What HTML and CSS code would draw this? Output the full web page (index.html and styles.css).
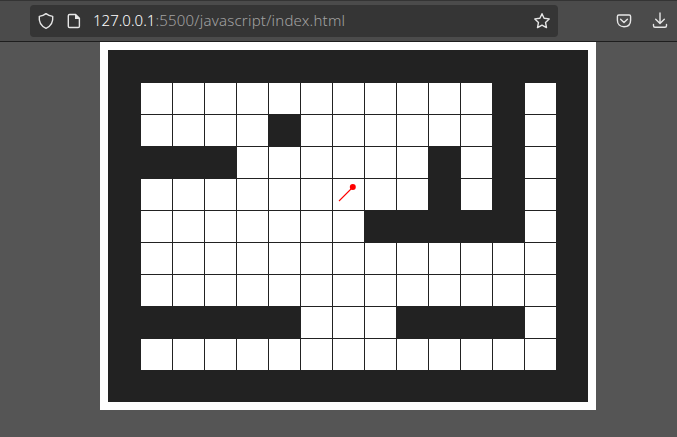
FILE: index.html
```
<!DOCTYPE html>
<html lang="en">
<head>
<meta charset="utf-8">
<title>Maze</title>
<link rel="stylesheet" href="styles.css">
</head>
<body>
<header class="toolbar">
  <div class="urlbar">
    <svg class="icon" viewBox="0 0 18 18"><path d="M9 1.6 C7.2 3.1 4.8 4 2.3 4.4 C1.7 9.6 3.8 14 9 16.3 C14.2 14 16.3 9.6 15.7 4.4 C13.2 4 10.8 3.1 9 1.6Z"/></svg>
    <svg class="icon page" viewBox="0 0 18 18"><path d="M4.6 2.5H10.6L14.4 6.3V14.2Q14.4 15.5 13.1 15.5H4.6Q3.3 15.5 3.3 14.2V3.8Q3.3 2.5 4.6 2.5Z"/><path class="solid" d="M10 2V7H15Z"/></svg>
    <span class="url"><span class="host">127.0.0.1</span><span class="path">:5500/javascript/index.html</span></span>
    <svg class="icon star" viewBox="0 0 18 18"><path d="M9 1.7 11.1 6.3 16.2 6.9 12.5 10.4 13.5 15.6 9 13.1 4.5 15.6 5.5 10.4 1.8 6.9 6.9 6.3Z"/></svg>
  </div>
  <svg class="icon pocket" viewBox="0 0 18 18"><path d="M3.8 3H14.2Q15.6 3 15.6 4.4V8.2C15.6 12.5 12.8 14.7 9 14.7S2.4 12.5 2.4 8.2V4.4Q2.4 3 3.8 3Z"/><path d="M5.6 7.2 9 10.4 12.4 7.2"/></svg>
  <svg class="icon download" viewBox="0 0 18 18"><path d="M9 1V11.4M4.7 7.2 9 11.5 13.3 7.2M2.5 12.4V13.8Q2.5 15.3 4 15.3H14Q15.5 15.3 15.5 13.8V12.4"/></svg>
</header>
<main class="stage">
  <div class="maze" id="maze"></div>
  <svg class="player" viewBox="0 0 32 32"><line x1="7" y1="23" x2="21" y2="9"/><circle cx="20.8" cy="8.9" r="3"/></svg>
</main>
<script src="maze.js"></script>
</body>
</html>
```
FILE: styles.css
```
* { box-sizing: border-box; }
body {
  margin: 0;
  height: 437px;
  overflow: hidden;
  background: #555;
}
.toolbar {
  display: flex;
  align-items: center;
  height: 42px;
  padding-left: 30px;
  background: #4b4b4b;
  border-top: 1px solid #343434;
  border-bottom: 1px solid #1e1e1e;
}
.urlbar {
  display: flex;
  align-items: center;
  width: 528px;
  height: 32px;
  padding: 0 7px;
  border-radius: 4px;
  background: #353535;
}
.icon {
  flex: none;
  width: 18px;
  height: 18px;
  fill: none;
  stroke: #e6e6e6;
  stroke-width: 1.4;
  stroke-linejoin: round;
  stroke-linecap: round;
}
.page { margin-left: 10px; }
.solid { fill: #e6e6e6; stroke: none; }
.url {
  margin-left: 10px;
  padding-bottom: 2px;
  font: 350 15px/20px "Noto Sans", sans-serif;
  white-space: nowrap;
}
.host { color: #fff; letter-spacing: 0; }
.path { color: #a2a2a2; letter-spacing: 0.21px; }
.star { margin-left: auto; }
.pocket { margin-left: 57px; }
.download { margin-left: 18px; }
.stage {
  position: relative;
  width: 496px;
  height: 368px;
  margin-left: 100px;
  padding: 8px;
  background: #fff;
}
.maze {
  display: grid;
  grid-template-columns: repeat(15, 32px);
  grid-auto-rows: 32px;
  background: #222;
}
.floor {
  background: #fff;
  border-top: 1px solid #222;
  border-left: 1px solid #222;
}
.player {
  position: absolute;
  left: 232px;
  top: 136px;
  width: 32px;
  height: 32px;
  fill: #f00;
}
.player line { stroke: #f00; stroke-width: 1.1; }
```
FILE: maze.js
```
const rows = [
  "###############",
  "#...........#.#",
  "#....#......#.#",
  "####......#.#.#",
  "#.........#.#.#",
  "#.......#####.#",
  "#.............#",
  "#.............#",
  "######...####.#",
  "#.............#",
  "###############"
];
const maze = document.getElementById("maze");
for (const tile of rows.join("")) {
  const cell = document.createElement("div");
  cell.className = tile === "#" ? "wall" : "floor";
  maze.append(cell);
}
```
